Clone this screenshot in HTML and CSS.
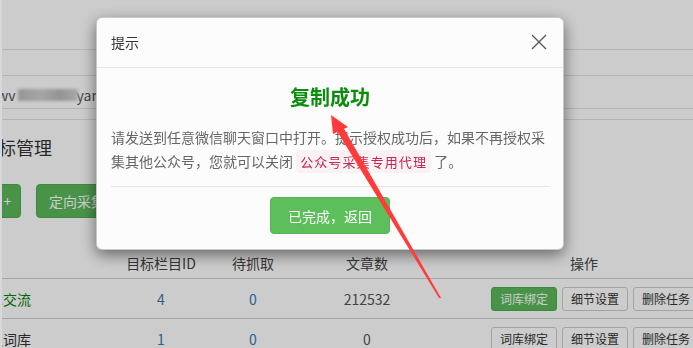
FILE: index.html
```html
<!DOCTYPE html>
<html lang="zh-CN">
  <head>
    <meta charset="UTF-8" />
    <meta name="viewport" content="width=device-width, initial-scale=1.0" />
    <title>目标管理</title>
    <link rel="stylesheet" href="styles.css">
  </head>
  <body>
    <div class="page">
      <div class="topbar"></div>
      <div class="tabs"></div>
      <div class="url-row">
        <span class="url">wv</span><span class="mosaic"></span><span class="url">yan.co</span>
      </div>
      <div class="sep"></div>
      <h2 class="title">目标管理</h2>
      <div class="toolbar">
        <button class="btn btn-green btn-add">+</button>
        <button class="btn btn-green">定向采集任务</button>
      </div>

      <div class="table">
        <div class="tr th">
          <div class="td c-name"></div>
          <div class="td c-id">目标栏目ID</div>
          <div class="td c-wait">待抓取</div>
          <div class="td c-num">文章数</div>
          <div class="td c-op">操作</div>
        </div>
        <div class="tr">
          <div class="td c-name"><span class="name-link">技术交流</span></div>
          <div class="td c-id"><span class="num-link">4</span></div>
          <div class="td c-wait"><span class="num-link">0</span></div>
          <div class="td c-num">212532</div>
          <div class="td c-op ops">
            <button class="btn-xs btn-xs-green">词库绑定</button>
            <button class="btn-xs">细节设置</button>
            <button class="btn-xs">删除任务</button>
          </div>
        </div>
        <div class="tr">
          <div class="td c-name">默认词库</div>
          <div class="td c-id"><span class="num-link">1</span></div>
          <div class="td c-wait"><span class="num-link">0</span></div>
          <div class="td c-num">0</div>
          <div class="td c-op ops">
            <button class="btn-xs">词库绑定</button>
            <button class="btn-xs">细节设置</button>
            <button class="btn-xs">删除任务</button>
          </div>
        </div>
      </div>
    </div>

    <div class="backdrop">
      <div class="modal">
        <div class="modal-header">
          <span class="modal-title">提示</span>
          <svg class="close" width="16" height="16" viewBox="0 0 16 16">
            <path d="M1 1 L15 15 M15 1 L1 15" stroke="#555" stroke-width="1.3" fill="none" />
          </svg>
        </div>
        <div class="modal-body">
          <h3 class="ok-title">复制成功</h3>
          <p class="ok-text">
            请发送到任意微信聊天窗口中打开。提示授权成功后，如果不再授权采集其他公众号，您就可以关闭 <code>公众号采集专用代理</code> 了。
          </p>
          <div class="rule"></div>
          <div class="actions">
            <button class="done-btn">已完成，返回</button>
          </div>
        </div>
      </div>
    </div>

    <div class="edge"></div>

    <svg class="arrow" width="693" height="348" viewBox="0 0 693 348">
      <polygon points="331,115 333,134 348,127" fill="#ff3b3b" />
      <polygon points="337,131 343,127 441,298 439,298" fill="#ff3b3b" />
    </svg>
  </body>
</html>
```

FILE: styles.css
```css
* {
  padding: 0;
  margin: 0;
  box-sizing: border-box;
}

body {
  width: 693px;
  height: 348px;
  overflow: hidden;
  background-color: #fff;
  color: #333;
  font-family: "Noto Sans CJK SC", "Liberation Sans", sans-serif;
  font-size: 14px;
}

.page {
  width: 693px;
  overflow: hidden;
}

.topbar {
  height: 50px;
  border-bottom: 1px solid #e2e2e2;
}

.tabs {
  height: 26px;
  border-bottom: 1px solid #e2e2e2;
}

.url-row {
  height: 33px;
  border-bottom: 1px solid #e2e2e2;
  display: flex;
  align-items: center;
  padding-top: 5px;
  color: #555;
  font-size: 14px;
}

.url {
  margin-left: -3px;
}

.mosaic {
  display: inline-block;
  width: 60px;
  height: 12px;
  margin: 0 2px;
  background: linear-gradient(90deg, #bdbdbd, #cfcfcf 40%, #b9b9b9 70%, #d2d2d2);
  filter: blur(1.5px);
}

.sep {
  height: 11px;
  border-bottom: 1px solid #e2e2e2;
}

.title {
  margin: 13px 0 0 -20px;
  font-size: 18px;
  font-weight: normal;
  line-height: 28px;
  color: #333;
}

.toolbar {
  display: flex;
  gap: 15px;
  margin-top: 23px;
  margin-left: -10px;
}

.btn {
  border: 1px solid transparent;
  border-radius: 4px;
  padding: 6px 12px;
  font-size: 14px;
  line-height: 20px;
  font-family: inherit;
}

.btn-green {
  background-color: #5cb85c;
  border-color: #4cae4c;
  color: #fff;
}

.btn-add {
  width: 31px;
  padding: 6px 0 6px 4px;
}

.table {
  margin-top: 30px;
}

.tr {
  display: flex;
  height: 40px;
  align-items: center;
  border-top: 1px solid #d0d0d0;
}

.th {
  height: 30px;
  border-top: none;
  color: #444;
}

.td {
  flex: none;
  text-align: center;
}

.c-name {
  width: 145px;
  text-align: left;
  margin-left: -25px;
}

.c-id {
  width: 82px;
}

.c-wait {
  width: 102px;
}

.c-num {
  width: 126px;
  color: #555;
}

.th .c-num {
  color: #444;
}

.c-op {
  width: 308px;
}

.ops {
  display: flex;
  gap: 5px;
  padding-left: 61px;
}

.name-link {
  color: #008000;
}

.num-link {
  color: #337ab7;
}

.btn-xs {
  border: 1px solid #ccc;
  border-radius: 3px;
  background-color: #fff;
  color: #333;
  padding: 2px 8px;
  font-size: 12px;
  line-height: 18px;
  font-family: inherit;
  flex: none;
}

.btn-xs-green {
  background-color: #5cb85c;
  border-color: #4cae4c;
  color: #fff;
}

.backdrop {
  position: fixed;
  top: 0;
  left: 0;
  right: 0;
  bottom: 0;
  background-color: rgba(0, 0, 0, 0.2);
  padding-top: 17px;
}

.modal {
  width: 468px;
  margin-left: 96px;
  background-color: #fcfcfc;
  border: 1px solid rgba(0, 0, 0, 0.2);
  border-radius: 6px;
  box-shadow: 0 5px 15px rgba(0, 0, 0, 0.5);
}

.modal-header {
  display: flex;
  justify-content: space-between;
  align-items: center;
  padding: 14px 15px 15px 14px;
  border-bottom: 1px solid #e5e5e5;
}

.modal-title {
  font-size: 14px;
  line-height: 20px;
  color: #333;
}

.close {
  margin-right: 1px;
}

.modal-body {
  padding: 15px 14px 15px;
}

.ok-title {
  text-align: center;
  font-size: 20px;
  line-height: 28px;
  color: #0c8c0c;
  font-weight: bold;
}

.ok-text {
  margin-top: 14px;
  line-height: 24px;
  color: #666;
}

code {
  font-family: "Noto Sans CJK SC", monospace;
  font-size: 13px;
  letter-spacing: 1.1px;
  padding: 2px 4px;
  color: #c7254e;
  background-color: #f9f2f4;
  border-radius: 4px;
}

.rule {
  margin: 12px 0 10px;
  border-top: 1px solid #e3e3e3;
}

.actions {
  display: flex;
  justify-content: center;
}

.done-btn {
  width: 120px;
  height: 37px;
  border: 1px solid #52b652;
  border-radius: 4px;
  background-color: #5cbf5c;
  color: #fff;
  font-size: 14px;
  font-family: inherit;
}

.edge {
  position: fixed;
  top: 0;
  left: 0;
  width: 2px;
  height: 348px;
  background-color: #d7d8dc;
}

.arrow {
  position: fixed;
  top: 0;
  left: 0;
  pointer-events: none;
}
```
